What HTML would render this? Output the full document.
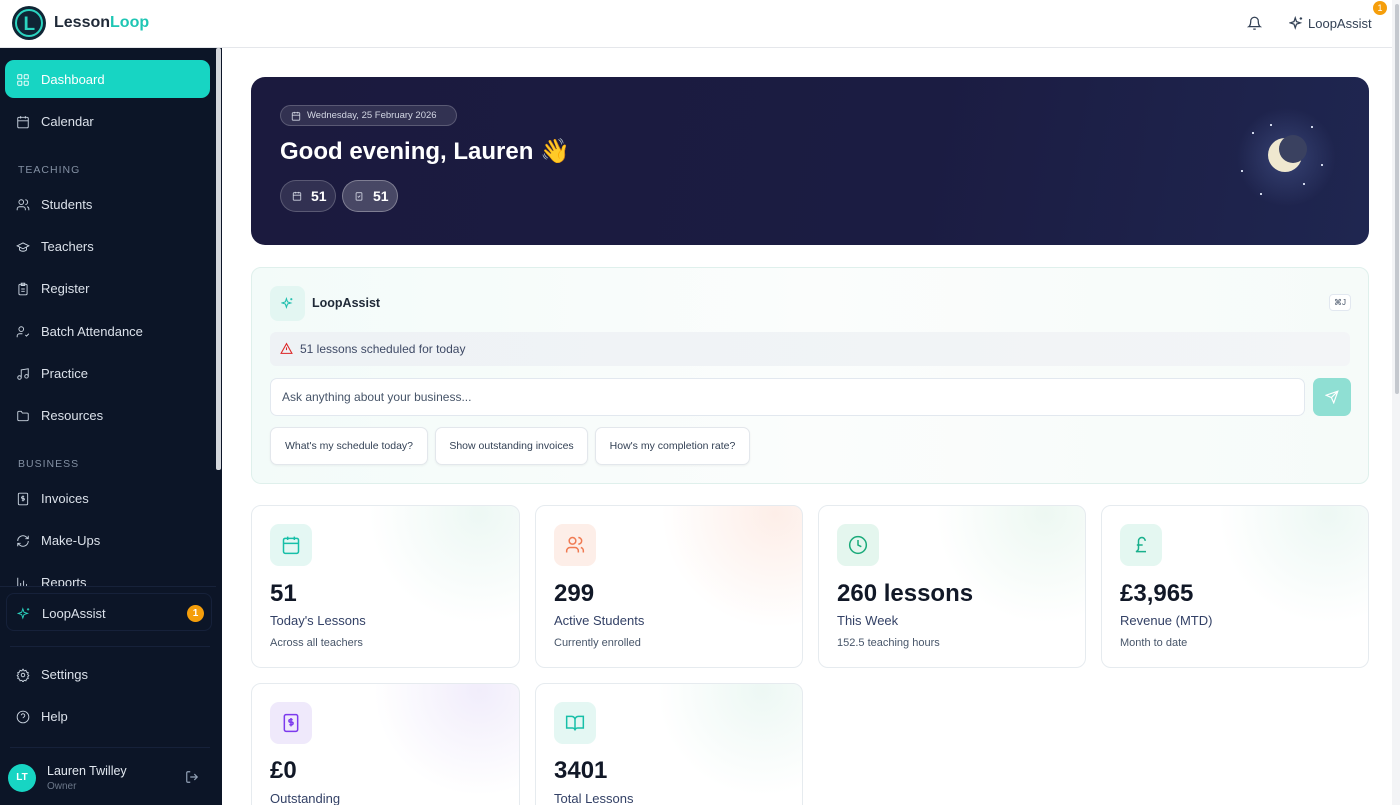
<!DOCTYPE html>
<html style="overflow:hidden;height:805px"><head><meta charset="utf-8"><style>
*{box-sizing:border-box;margin:0;padding:0}
body{width:1400px;height:805px;overflow:hidden;font-family:"Liberation Sans",sans-serif;background:#fff;position:relative;color:#0f172a}
.hdr{position:absolute;left:0;top:0;width:1392px;height:48px;background:#fff;border-bottom:1px solid #e5e7eb}
.sb{position:absolute;left:0;top:48px;width:222px;height:757px;background:#0c1527}
.nav{position:absolute;left:16px;display:flex;align-items:center;gap:11px;color:#dbe1ea;font-size:13px}
.nav svg{width:14px;height:14px;stroke:#cbd5e1;fill:none;stroke-width:1.6}
.sec{position:absolute;left:18px;font-size:10.5px;letter-spacing:1px;color:#8390a3}
.main{position:absolute;left:222px;top:48px;width:1170px;height:757px;background:#fff}
.card{position:absolute;border:1px solid #e6ebef;border-radius:10px;background:#fff;overflow:hidden}
.ic{position:absolute;left:18px;top:18px;width:42px;height:42px;border-radius:9px;display:flex;align-items:center;justify-content:center}
.ic svg{width:20px;height:20px;fill:none;stroke-width:1.8}
.big{position:absolute;left:18px;top:74px;font-size:24px;font-weight:bold;color:#111827}
.lab{position:absolute;left:18px;top:107px;font-size:13px;color:#334166}
.sub{position:absolute;left:18px;top:131px;font-size:11px;color:#475569}
.chip{position:absolute;top:427px;height:38px;border:1px solid #e3e7ec;border-radius:7px;background:#fff;font-size:10.5px;color:#334155;display:flex;align-items:center;justify-content:center;white-space:nowrap;box-shadow:0 1px 2px rgba(0,0,0,.05)}
#clip{position:absolute;left:0;top:0;width:1400px;height:805px;overflow:hidden}
</style></head><body><div id="clip">
<div class="hdr">
 <svg style="position:absolute;left:11px;top:5px" width="36" height="36" viewBox="0 0 36 36"><circle cx="18" cy="18" r="17" fill="#0f2535"/><circle cx="18" cy="18" r="13" fill="none" stroke="#2bd4c0" stroke-width="2"/><text x="12.5" y="25" font-size="19" font-weight="bold" fill="#2bd4c0" font-family="Liberation Sans">L</text></svg>
 <div style="position:absolute;left:54px;top:14px;font-size:16px;font-weight:bold;color:#1f2937">Lesson<span style="color:#1fc6b4">Loop</span></div>
 <svg style="position:absolute;left:1247px;top:16px" width="15" height="15" viewBox="0 0 24 24" fill="none" stroke="#334155" stroke-width="2"><path d="M6 8a6 6 0 0 1 12 0c0 7 3 9 3 9H3s3-2 3-9M10 21h4"/></svg>
 <svg style="position:absolute;left:1289px;top:16px" width="15" height="15" viewBox="0 0 24 24" fill="none" stroke="#334155" stroke-width="2"><path d="M10 3l2 6 6 2-6 2-2 6-2-6-6-2 6-2zM19 2v4M17 4h4"/></svg>
 <div style="position:absolute;left:1308px;top:16px;font-size:13px;color:#334155">LoopAssist</div>
 <div style="position:absolute;left:1373px;top:1px;width:14px;height:14px;border-radius:7px;background:#f59e0b;color:#fff;font-size:9px;text-align:center;line-height:14px">1</div>
</div>
<div style="position:absolute;left:1392px;top:0;width:8px;height:805px;background:#f3f4f6"></div>
<div style="position:absolute;left:1395px;top:4px;width:4px;height:390px;border-radius:2px;background:#c4c8ce"></div>
<div class="sb">
 <div style="position:absolute;left:216px;top:0;width:5px;height:422px;border-radius:2px;background:#d4d7dc"></div>
 <div style="position:absolute;left:5px;top:12px;width:205px;height:38px;border-radius:9px;background:#17d5c3"></div>
 <div class="nav" style="top:24px;color:#fff"><svg viewBox="0 0 24 24" style="stroke:#fff"><rect x="3" y="3" width="7" height="7" rx="1"/><rect x="14" y="3" width="7" height="7" rx="1"/><rect x="14" y="14" width="7" height="7" rx="1"/><rect x="3" y="14" width="7" height="7" rx="1"/></svg>Dashboard</div>
 <div class="nav" style="top:66px"><svg viewBox="0 0 24 24"><rect x="3" y="4" width="18" height="18" rx="2"/><path d="M16 2v4M8 2v4M3 10h18"/></svg>Calendar</div>
 <div class="sec" style="top:116px">TEACHING</div>
 <div class="nav" style="top:149px"><svg viewBox="0 0 24 24"><circle cx="9" cy="7" r="4"/><path d="M2 21v-2a4 4 0 0 1 4-4h6a4 4 0 0 1 4 4v2M16 3a4 4 0 0 1 0 8M22 21v-2a4 4 0 0 0-3-4"/></svg>Students</div>
 <div class="nav" style="top:191px"><svg viewBox="0 0 24 24"><path d="M22 10L12 5 2 10l10 5 10-5zM6 12v5c3 3 9 3 12 0v-5"/></svg>Teachers</div>
 <div class="nav" style="top:233px"><svg viewBox="0 0 24 24"><rect x="5" y="4" width="14" height="18" rx="2"/><path d="M9 2h6v4H9zM9 12h6M9 16h6"/></svg>Register</div>
 <div class="nav" style="top:276px"><svg viewBox="0 0 24 24"><circle cx="9" cy="7" r="4"/><path d="M2 21v-2a4 4 0 0 1 4-4h5M16 17l2 2 4-4"/></svg>Batch Attendance</div>
 <div class="nav" style="top:318px"><svg viewBox="0 0 24 24"><path d="M9 18V5l12-2v13"/><circle cx="6" cy="18" r="3"/><circle cx="18" cy="16" r="3"/></svg>Practice</div>
 <div class="nav" style="top:360px"><svg viewBox="0 0 24 24"><path d="M3 6a2 2 0 0 1 2-2h4l2 3h8a2 2 0 0 1 2 2v9a2 2 0 0 1-2 2H5a2 2 0 0 1-2-2z"/></svg>Resources</div>
 <div class="sec" style="top:410px">BUSINESS</div>
 <div class="nav" style="top:443px"><svg viewBox="0 0 24 24"><rect x="4" y="2" width="16" height="20" rx="2"/><path d="M14 8h-3a1.5 1.5 0 0 0 0 3h2a1.5 1.5 0 0 1 0 3h-3M12 6v10"/></svg>Invoices</div>
 <div class="nav" style="top:485px"><svg viewBox="0 0 24 24"><path d="M21 12a9 9 0 0 1-15 6.7L3 16M3 12a9 9 0 0 1 15-6.7L21 8M21 3v5h-5M3 21v-5h5"/></svg>Make-Ups</div>
 <div class="nav" style="top:527px"><svg viewBox="0 0 24 24"><path d="M3 3v18M8 17v-5M13 17V8M18 17v-3"/></svg>Reports</div>
 <div style="position:absolute;left:0;top:538px;width:216px;height:50px;background:#0c1527;border-top:1px solid #17223a"></div>
 <div style="position:absolute;left:6px;top:545px;width:206px;height:38px;border:1px solid #16213a;border-radius:8px"></div>
 <div class="nav" style="top:558px;left:17px"><svg viewBox="0 0 24 24" style="stroke:#2bd4c0"><path d="M10 3l2 6 6 2-6 2-2 6-2-6-6-2 6-2zM19 2v4M17 4h4"/></svg>LoopAssist</div>
 <div style="position:absolute;left:187px;top:557px;width:17px;height:17px;border-radius:9px;background:#f59e0b;color:#fff;font-size:10px;text-align:center;line-height:17px;font-weight:bold">1</div>
 <div style="position:absolute;left:10px;top:598px;width:200px;height:1px;background:#16213a"></div>
 <div class="nav" style="top:619px"><svg viewBox="0 0 24 24"><circle cx="12" cy="12" r="3"/><path d="M12 2l2 3 3-1 1 3 3 1-1 3 2 2-2 2 1 3-3 1-1 3-3-1-2 3-2-3-3 1-1-3-3-1 1-3-2-2 2-2-1-3 3-1 1-3 3 1z"/></svg>Settings</div>
 <div class="nav" style="top:661px"><svg viewBox="0 0 24 24"><circle cx="12" cy="12" r="10"/><path d="M9 9a3 3 0 0 1 6 1c0 2-3 2-3 4M12 17h.01"/></svg>Help</div>
 <div style="position:absolute;left:10px;top:699px;width:200px;height:1px;background:#16213a"></div>
 <div style="position:absolute;left:8px;top:716px;width:28px;height:28px;border-radius:14px;background:#17d5c3;color:#fff;font-size:10px;font-weight:bold;text-align:center;line-height:28px">LT</div>
 <div style="position:absolute;left:47px;top:716px;font-size:12.5px;color:#e2e8f0">Lauren Twilley</div>
 <div style="position:absolute;left:47px;top:733px;font-size:10px;color:#6b7789">Owner</div>
 <svg style="position:absolute;left:185px;top:722px" width="14" height="14" viewBox="0 0 24 24" fill="none" stroke="#94a3b8" stroke-width="2"><path d="M9 21H5a2 2 0 0 1-2-2V5a2 2 0 0 1 2-2h4M16 17l5-5-5-5M21 12H9"/></svg>
</div>
<div class="main"></div>
<div style="position:absolute;left:251px;top:77px;width:1118px;height:168px;border-radius:14px;background:linear-gradient(100deg,#1b1a3e,#1b1c42 60%,#1f2650);overflow:hidden">
 <div style="position:absolute;left:985px;top:30px;width:100px;height:100px;border-radius:50%;background:radial-gradient(circle,rgba(90,110,170,.4),rgba(40,50,100,0) 70%)"></div>
 <div style="position:absolute;left:1017px;top:61px;width:34px;height:34px;border-radius:50%;background:#efe8cf"></div>
 <div style="position:absolute;left:1028px;top:58px;width:28px;height:28px;border-radius:50%;background:#3a4160"></div>
 <div style="position:absolute;left:1060px;top:49px;width:2px;height:2px;background:#cfd6ea"></div>
 <div style="position:absolute;left:1070px;top:87px;width:2px;height:2px;background:#cfd6ea"></div>
 <div style="position:absolute;left:990px;top:93px;width:2px;height:2px;background:#cfd6ea"></div>
 <div style="position:absolute;left:1001px;top:55px;width:2px;height:2px;background:#cfd6ea"></div>
 <div style="position:absolute;left:1019px;top:47px;width:2px;height:2px;background:#cfd6ea"></div>
 <div style="position:absolute;left:1009px;top:116px;width:2px;height:2px;background:#cfd6ea"></div>
 <div style="position:absolute;left:1052px;top:106px;width:2px;height:2px;background:#cfd6ea"></div>
 <div style="position:absolute;left:29px;top:28px;height:21px;width:177px;border:1px solid rgba(255,255,255,.2);border-radius:11px;background:rgba(255,255,255,.1);font-size:9.5px;color:#d3d7e4;line-height:19px;padding-left:26px">Wednesday, 25 February 2026</div>
 <svg style="position:absolute;left:40px;top:34px" width="10" height="10" viewBox="0 0 24 24" fill="none" stroke="#d3d7e4" stroke-width="2"><rect x="3" y="4" width="18" height="18" rx="2"/><path d="M16 2v4M8 2v4M3 10h18"/></svg>
 <div style="position:absolute;left:29px;top:60px;font-size:24px;font-weight:bold;color:#fff">Good evening, Lauren 👋</div>
 <div style="position:absolute;left:29px;top:103px;width:56px;height:32px;border-radius:16px;border:1px solid rgba(255,255,255,.2);background:rgba(255,255,255,.1);color:#fff;font-size:14px;font-weight:bold;line-height:30px;padding-left:30px">51</div>
 <svg style="position:absolute;left:41px;top:114px" width="10" height="10" viewBox="0 0 24 24" fill="none" stroke="#d3d7e4" stroke-width="2"><rect x="3" y="4" width="18" height="18" rx="2"/><path d="M16 2v4M8 2v4M3 10h18"/></svg>
 <div style="position:absolute;left:91px;top:103px;width:56px;height:32px;border-radius:16px;border:1px solid rgba(255,255,255,.3);background:rgba(255,255,255,.2);color:#fff;font-size:14px;font-weight:bold;line-height:30px;padding-left:30px">51</div>
 <svg style="position:absolute;left:103px;top:114px" width="10" height="10" viewBox="0 0 24 24" fill="none" stroke="#d3d7e4" stroke-width="2"><rect x="5" y="4" width="14" height="18" rx="2"/><path d="M9 13l2 2 4-4"/></svg>
</div>
<div class="card" style="left:251px;top:267px;width:1118px;height:217px;background:linear-gradient(90deg,#f3fbf9,#fbfdfc 50%,#f6fbf9);border-color:#dff0ec">
 <div style="position:absolute;left:18px;top:18px;width:35px;height:35px;border-radius:8px;background:#e3f6f2"></div>
 <svg style="position:absolute;left:29px;top:29px" width="13" height="13" viewBox="0 0 24 24" fill="none" stroke="#1fbfae" stroke-width="2"><path d="M10 3l2 6 6 2-6 2-2 6-2-6-6-2 6-2zM19 2v4M17 4h4"/></svg>
 <div style="position:absolute;left:60px;top:28px;font-size:12.5px;font-weight:bold;color:#1f2937">LoopAssist</div>
 <div style="position:absolute;left:1077px;top:26px;width:22px;height:17px;border:1px solid #e2e8f0;border-radius:4px;background:#fff;font-size:8px;color:#475569;text-align:center;line-height:15px">⌘J</div>
 <div style="position:absolute;left:18px;top:64px;width:1080px;height:34px;border-radius:6px;background:linear-gradient(90deg,#eef2f5,#f3f5f7)"></div>
 <svg style="position:absolute;left:28px;top:74px" width="13" height="13" viewBox="0 0 24 24" fill="none" stroke="#dc2626" stroke-width="2"><path d="M12 3L2 21h20zM12 10v5M12 18h.01"/></svg>
 <div style="position:absolute;left:48px;top:74px;font-size:12px;color:#3f4a66">51 lessons scheduled for today</div>
 <div style="position:absolute;left:18px;top:110px;width:1035px;height:38px;border:1px solid #e2e8ef;border-radius:7px;background:#fff;font-size:12px;color:#475569;line-height:36px;padding-left:11px">Ask anything about your business...</div>
 <div style="position:absolute;left:1061px;top:110px;width:38px;height:38px;border-radius:7px;background:#8fdfd3"></div>
 <svg style="position:absolute;left:1073px;top:122px" width="14" height="14" viewBox="0 0 24 24" fill="none" stroke="#fff" stroke-width="2"><path d="M22 2L11 13M22 2l-7 20-4-9-9-4z"/></svg>
</div>
<div class="chip" style="left:270px;width:158px">What's my schedule today?</div>
<div class="chip" style="left:435px;width:153px">Show outstanding invoices</div>
<div class="chip" style="left:595px;width:155px">How's my completion rate?</div>

<div class="card" style="left:251px;top:505px;width:269px;height:163px;background:radial-gradient(circle at 85% 5%,#edf8f4,#fff 40%)">
 <div class="ic" style="background:#e4f7f3"><svg viewBox="0 0 24 24" stroke="#17bfa8"><rect x="3" y="4" width="18" height="18" rx="2"/><path d="M16 2v4M8 2v4M3 10h18"/></svg></div>
 <div class="big">51</div><div class="lab">Today's Lessons</div><div class="sub">Across all teachers</div></div>
<div class="card" style="left:535px;top:505px;width:268px;height:163px;background:radial-gradient(circle at 90% 5%,#fdeee8,#fff 40%)">
 <div class="ic" style="background:#fdeee8"><svg viewBox="0 0 24 24" stroke="#f07a52"><circle cx="9" cy="7" r="4"/><path d="M2 21v-2a4 4 0 0 1 4-4h6a4 4 0 0 1 4 4v2M16 3a4 4 0 0 1 0 8M22 21v-2a4 4 0 0 0-3-4"/></svg></div>
 <div class="big">299</div><div class="lab">Active Students</div><div class="sub">Currently enrolled</div></div>
<div class="card" style="left:818px;top:505px;width:268px;height:163px;background:radial-gradient(circle at 85% 5%,#edf8f2,#fff 40%)">
 <div class="ic" style="background:#e4f6ee"><svg viewBox="0 0 24 24" stroke="#1aaa7a"><circle cx="12" cy="12" r="10"/><path d="M12 6v6l4 2"/></svg></div>
 <div class="big">260 lessons</div><div class="lab">This Week</div><div class="sub">152.5 teaching hours</div></div>
<div class="card" style="left:1101px;top:505px;width:268px;height:163px;background:radial-gradient(circle at 85% 5%,#edf8f4,#fff 40%)">
 <div class="ic" style="background:#e4f7f1"><svg viewBox="0 0 24 24" stroke="#18b08c"><path d="M17 7a4 4 0 0 0-8 0v5H7M9 12v4c0 2-1 3-3 4h12M7 12h7"/></svg></div>
 <div class="big">£3,965</div><div class="lab">Revenue (MTD)</div><div class="sub">Month to date</div></div>
<div class="card" style="left:251px;top:683px;width:269px;height:140px;background:radial-gradient(circle at 85% 5%,#f1edfb,#fff 40%)">
 <div class="ic" style="background:#efe9fb"><svg viewBox="0 0 24 24" stroke="#7c3aed"><rect x="4" y="2" width="16" height="20" rx="2"/><path d="M14 8h-3a1.5 1.5 0 0 0 0 3h2a1.5 1.5 0 0 1 0 3h-3M12 6v10"/></svg></div>
 <div class="big" style="top:73px">£0</div><div class="lab" style="top:107px">Outstanding</div></div>
<div class="card" style="left:535px;top:683px;width:268px;height:140px;background:radial-gradient(circle at 85% 5%,#edf8f4,#fff 40%)">
 <div class="ic" style="background:#e4f7f3"><svg viewBox="0 0 24 24" stroke="#17bfa8"><path d="M2 4h6a4 4 0 0 1 4 4v13a3 3 0 0 0-3-3H2zM22 4h-6a4 4 0 0 0-4 4v13a3 3 0 0 1 3-3h7z"/></svg></div>
 <div class="big" style="top:73px">3401</div><div class="lab" style="top:107px">Total Lessons</div></div>
</div></body></html>
